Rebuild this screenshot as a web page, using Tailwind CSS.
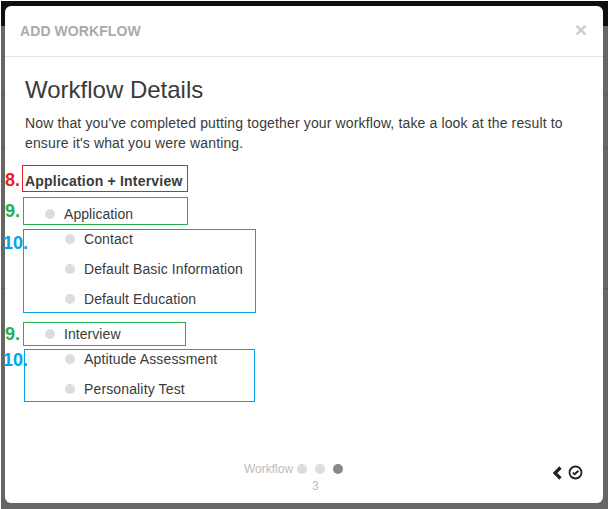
<!DOCTYPE html>
<html lang="en">
<head>
    <meta charset="UTF-8">
    <title>Add Workflow</title>
    <script src="https://cdn.jsdelivr.net/npm/@tailwindcss/browser@4"></script>
</head>
<body class="bg-white font-['Liberation_Sans',Arial,sans-serif] overflow-hidden">
    <div class="relative h-[509px] w-[609px] overflow-hidden border-x border-white bg-[#666666] pt-[6px] pl-[4px]">
        <!-- page behind the overlay -->
        <div class="absolute left-0 right-0 top-0 h-px bg-white"></div>
        <div class="absolute left-0 right-0 top-px h-[25px] bg-[#0f0f0f]"></div>
        <div class="absolute left-0 right-0 top-[94px] h-px bg-[#585858]"></div>
        <div class="absolute left-0 right-0 top-[148px] h-px bg-[#585858]"></div>
        <div class="absolute left-0 right-0 top-[288px] h-px bg-[#585858]"></div>

        <!-- modal -->
        <div class="relative flex h-[497px] w-[598px] flex-col rounded-[6px] bg-white text-[#3a3a3a]">
            <div class="flex h-[51px] shrink-0 items-center justify-between border-b border-[#e5e5e5] pl-[15px] pr-[16px]">
                <span class="text-[14px] font-bold tracking-[0.08px] text-[#aaaaaa]">ADD WORKFLOW</span>
                <span class="mb-[4px] text-[21px] leading-none font-bold text-[#cccccc]">×</span>
            </div>

            <div class="flex-1 pl-[17px]">
                <h2 class="mt-[20px] pl-[3px] text-[24px] leading-[26px] font-normal">Workflow Details</h2>
                <p class="mt-[10px] w-[560px] pl-[3px] text-[14px] leading-[20px] tracking-[0.14px]">Now that you've completed putting together your workflow, take a look at the result to ensure it's what you were wanting.</p>

                <div class="mt-[12px] h-[27px] w-[166px] border border-[#ed1c24] pl-[2px] pt-[6px] text-[14px] leading-[18px] font-bold tracking-[0.2px]">Application + Interview</div>

                <div class="ml-px mt-[5px] flex h-[28px] w-[165px] items-start gap-[9px] border border-[#22b14c] pl-[21px] pt-[7px] text-[14px] leading-[18px] tracking-[0.06px]">
                    <span class="mt-[4px] size-[10px] rounded-full bg-[#dddddd]"></span>Application
                </div>
                <div class="ml-px mt-[4px] h-[84px] w-[233px] border border-[#00a2e8] pl-[41px] text-[14px] tracking-[0.1px]">
                    <div class="flex h-[18px] items-center gap-[9px]"><span class="size-[10px] rounded-full bg-[#dddddd]"></span>Contact</div>
                    <div class="mt-[12px] flex h-[18px] items-center gap-[9px]"><span class="size-[10px] rounded-full bg-[#dddddd]"></span>Default Basic Information</div>
                    <div class="mt-[12px] flex h-[18px] items-center gap-[9px]"><span class="size-[10px] rounded-full bg-[#dddddd]"></span>Default Education</div>
                </div>

                <div class="ml-px mt-[9px] flex h-[24px] w-[163px] items-center gap-[9px] border border-[#22b14c] pl-[21px] text-[14px] tracking-[0.06px]">
                    <span class="size-[10px] rounded-full bg-[#dddddd]"></span>Interview
                </div>
                <div class="ml-[2px] mt-[3px] h-[53px] w-[231px] border border-[#00a2e8] pl-[40px] text-[14px] tracking-[0.14px]">
                    <div class="flex h-[18px] items-center gap-[9px]"><span class="size-[10px] rounded-full bg-[#dddddd]"></span>Aptitude Assessment</div>
                    <div class="mt-[12px] flex h-[18px] items-center gap-[9px]"><span class="size-[10px] rounded-full bg-[#dddddd]"></span>Personality Test</div>
                </div>
            </div>

            <!-- wizard footer -->
            <div class="relative h-[48px] shrink-0">
                <div class="ml-[239px] mt-[7px] flex h-[14px] items-center text-[12px] text-[#bbbbbb]">
                    <span class="w-[53px]">Workflow</span>
                    <span class="size-[10px] rounded-full bg-[#dddddd]"></span>
                    <span class="ml-[8px] size-[10px] rounded-full bg-[#dddddd]"></span>
                    <span class="ml-[8px] size-[10px] rounded-full bg-[#888888]"></span>
                </div>
                <div class="ml-[307px] mt-[3px] text-[12px] leading-[14px] text-[#bbbbbb]">3</div>
                <div class="absolute right-[20px] top-[10px] flex items-center gap-[5px]">
                    <svg width="11" height="14" viewBox="0 0 11 14" fill="none"><path d="M8.5 1.5 3 7l5.5 5.5" stroke="#222222" stroke-width="3.2"/></svg>
                    <svg width="15" height="15" viewBox="0 0 15 15" fill="none"><circle cx="7.5" cy="7.5" r="6" stroke="#222222" stroke-width="1.8"/><path d="M4.8 7.6 6.7 9.3 10.4 5.8" stroke="#222222" stroke-width="1.9"/></svg>
                </div>
            </div>
        </div>

        <!-- annotation numbers painted over the screenshot -->
        <span class="absolute left-[4px] top-[170px] text-[18px] leading-[20px] font-bold text-[#ed1c24]">8.</span>
        <span class="absolute left-[4px] top-[201px] text-[18px] leading-[20px] font-bold text-[#22b14c]">9.</span>
        <span class="absolute left-[2px] top-[233px] text-[18px] leading-[20px] font-bold text-[#00a2e8]">10.</span>
        <span class="absolute left-[4px] top-[324px] text-[18px] leading-[20px] font-bold text-[#22b14c]">9.</span>
        <span class="absolute left-[2px] top-[350px] text-[18px] leading-[20px] font-bold text-[#00a2e8]">10.</span>
    </div>
</body>
</html>
